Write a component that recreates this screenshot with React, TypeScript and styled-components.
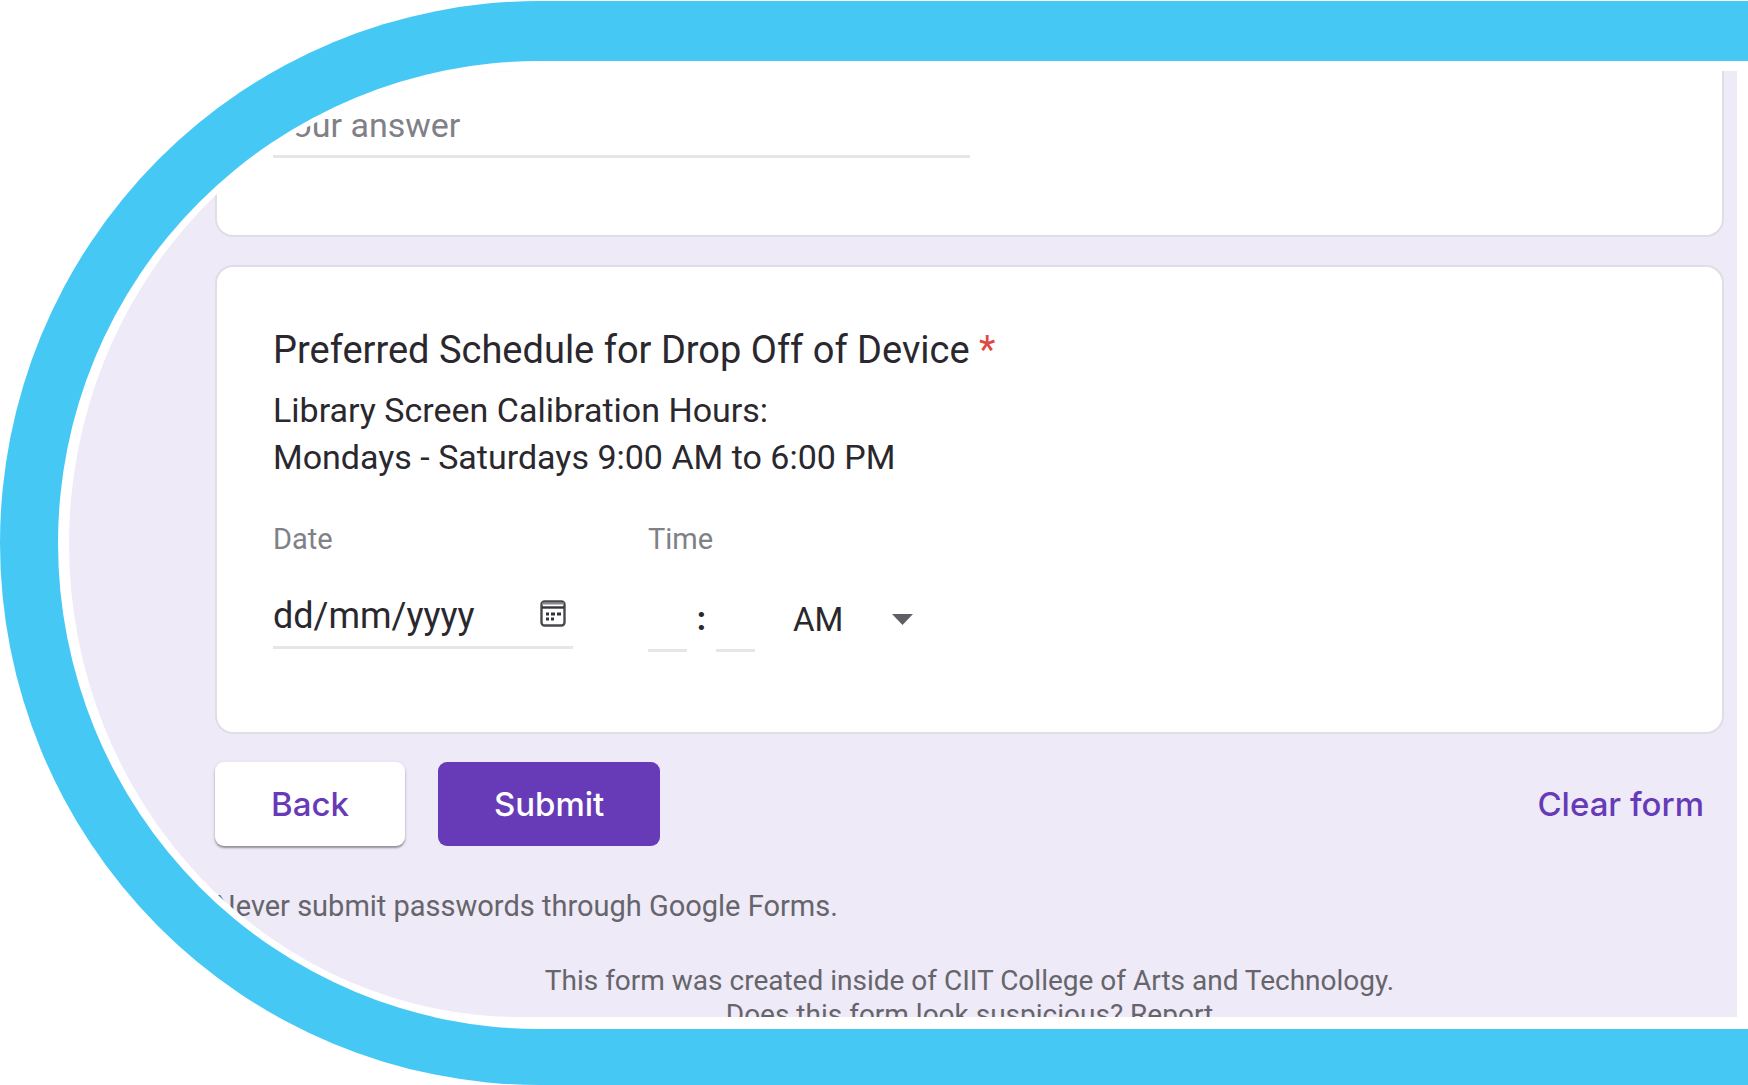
import React from "react";
import styled, { createGlobalStyle } from "styled-components";

const colors = {
  frame: "#46c8f5",
  sheet: "#eeeaf7",
  line: "#e6e6e8",
  cardBorder: "#dfdee5",
  ink: "#2a282e",
  muted: "#808087",
  footer: "#65656b",
  accent: "#673ab7",
  danger: "#e04a3f",
};

const GlobalStyle = createGlobalStyle`
  *, *::before, *::after { box-sizing: border-box; }
  body { margin: 0; background: #fff; font-family: Roboto, "Liberation Sans", sans-serif; color: ${colors.ink}; }
  input, select, button { font: inherit; color: inherit; margin: 0; padding: 0; border: 0; background: none; outline: none; border-radius: 0; }
  h2, p { margin: 0; }
`;

const Page = styled.div`
  height: 100vh;
  padding: 1px 0 0;
  overflow: hidden;
`;

const Frame = styled.div`
  display: flex;
  height: 100%;
  padding: 10px 11px 12px;
  border: solid ${colors.frame};
  border-width: 60px 0 56px 58px;
  border-radius: 540px 0 0 540px / 50% 0 0 50%;
`;

const Sheet = styled.main`
  flex: 1;
  min-width: 0;
  padding: 0 13px 0 146px;
  overflow: hidden;
  background: ${colors.sheet};
  border-radius: 452px 0 0 452px / 50% 0 0 50%;
`;

const Card = styled.section<{ $continued?: boolean }>`
  padding: ${(p) => (p.$continued ? "24px 56px 77px" : "55px 56px 80px")};
  border: 2px solid ${colors.cardBorder};
  border-top-width: ${(p) => (p.$continued ? "0" : "2px")};
  border-radius: ${(p) => (p.$continued ? "0 0 18px 18px" : "18px")};
  background: #fff;

  & + & {
    margin-top: 28px;
  }
`;

const Title = styled.h2`
  font-size: 38px;
  font-weight: 400;
  line-height: 56px;
`;

const Required = styled.span`
  color: ${colors.danger};
`;

const Description = styled.p`
  margin-top: 9px;
  font-size: 34px;
  line-height: 47px;
`;

const TextInput = styled.input`
  display: block;
  width: 50%;
  height: 63px;
  border-bottom: 3px solid ${colors.line};
  font-size: 34px;

  &::placeholder {
    color: ${colors.muted};
    opacity: 1;
  }
`;

const Fields = styled.div`
  display: flex;
  gap: 75px;
  margin-top: 40px;
`;

const Field = styled.div`
  display: flex;
  flex-direction: column;
  gap: 29px;
`;

const Label = styled.label`
  color: ${colors.muted};
  font-size: 29px;
  line-height: 36px;
`;

const DateBox = styled.div`
  display: flex;
  align-items: center;
  width: 300px;
  height: 63px;
  border-bottom: 3px solid ${colors.line};
`;

const DateInput = styled.input`
  flex: 1;
  min-width: 0;
  font-size: 36px;

  &::placeholder {
    color: ${colors.ink};
    opacity: 1;
  }
`;

const IconButton = styled.button`
  display: flex;
  padding: 0 7px 6px;
`;

const TimeRow = styled.div`
  display: flex;
  align-items: flex-end;
  height: 66px;
  font-size: 33px;
`;

const TimeInput = styled.input`
  width: 39px;
  height: 63px;
  border-bottom: 3px solid ${colors.line};
  text-align: center;
`;

const Colon = styled.span`
  width: 29px;
  line-height: 66px;
  text-align: center;
  font-weight: 700;
`;

const SelectBox = styled.div`
  display: grid;
  align-items: center;
  width: 120px;
  height: 66px;
  margin-left: 38px;

  & > * {
    grid-area: 1 / 1;
  }

  & > svg {
    justify-self: end;
    pointer-events: none;
  }
`;

const Select = styled.select`
  width: 100%;
  height: 60px;
  appearance: none;
`;

const Actions = styled.div`
  display: flex;
  align-items: center;
  gap: 33px;
  margin-top: 28px;
`;

const Button = styled.button<{ $kind: "plain" | "primary" | "text" }>`
  height: 84px;
  padding: 0 ${(p) => (p.$kind === "text" ? 20 : 56)}px;
  margin-left: ${(p) => (p.$kind === "text" ? "auto" : "0")};
  border-radius: 9px;
  background: ${(p) => ({ plain: "#fff", primary: colors.accent, text: "transparent" })[p.$kind]};
  box-shadow: ${(p) => (p.$kind === "plain" ? "0 2px 2px rgba(0, 0, 0, 0.35), 0 1px 5px rgba(0, 0, 0, 0.08)" : "none")};
  color: ${(p) => (p.$kind === "primary" ? "#fff" : colors.accent)};
  font-family: Inter, Roboto, sans-serif;
  font-size: 33px;
  font-weight: 500;
`;

const Note = styled.p<{ $centered?: boolean }>`
  margin-top: ${(p) => (p.$centered ? 41 : 43)}px;
  color: ${colors.footer};
  font-size: ${(p) => (p.$centered ? 28 : 29)}px;
  line-height: 34px;
  text-align: ${(p) => (p.$centered ? "center" : "left")};
`;

const NoteLink = styled.a`
  color: inherit;
  text-decoration: none;
`;

const CalendarIcon = () => (
  <svg width="26" height="27" viewBox="0 0 26 27" fill="none" aria-hidden="true">
    <rect x="1.5" y="1.5" width="23" height="24" rx="3" stroke="#4a484e" strokeWidth="2.4" />
    <path d="M2 3.5h22" stroke="#8a888e" strokeWidth="2" />
    <path d="M2 7.5h22" stroke="#35333a" strokeWidth="2.4" />
    <path d="M6 14h3M11 14h4M17 14h4M6 19h3M11 19h3" stroke="#35333a" strokeWidth="3" />
  </svg>
);

const ArrowIcon = () => (
  <svg width="21" height="11" viewBox="0 0 21 11" aria-hidden="true">
    <path d="M0 0h21L10.5 11z" fill="#5f6066" />
  </svg>
);

export default function App() {
  return (
    <>
      <GlobalStyle />
      <Page>
        <Frame>
          <Sheet>
            <Card $continued>
              <TextInput type="text" placeholder="Your answer" aria-label="Your answer" />
            </Card>

            <Card>
              <Title>
                Preferred Schedule for Drop Off of Device <Required>*</Required>
              </Title>
              <Description>
                Library Screen Calibration Hours:
                <br />
                Mondays - Saturdays 9:00 AM to 6:00 PM
              </Description>
              <Fields>
                <Field>
                  <Label htmlFor="date">Date</Label>
                  <DateBox>
                    <DateInput id="date" type="text" placeholder="dd/mm/yyyy" />
                    <IconButton type="button" aria-label="Open calendar">
                      <CalendarIcon />
                    </IconButton>
                  </DateBox>
                </Field>
                <Field>
                  <Label htmlFor="hour">Time</Label>
                  <TimeRow>
                    <TimeInput id="hour" type="text" aria-label="Hour" />
                    <Colon>:</Colon>
                    <TimeInput type="text" aria-label="Minute" />
                    <SelectBox>
                      <Select aria-label="AM or PM" defaultValue="AM">
                        <option>AM</option>
                        <option>PM</option>
                      </Select>
                      <ArrowIcon />
                    </SelectBox>
                  </TimeRow>
                </Field>
              </Fields>
            </Card>

            <Actions>
              <Button type="button" $kind="plain">Back</Button>
              <Button type="submit" $kind="primary">Submit</Button>
              <Button type="reset" $kind="text">Clear form</Button>
            </Actions>

            <Note>Never submit passwords through Google Forms.</Note>
            <Note $centered>
              This form was created inside of CIIT College of Arts and Technology.
              <br />
              Does this form look suspicious? <NoteLink href="#report">Report</NoteLink>
            </Note>
          </Sheet>
        </Frame>
      </Page>
    </>
  );
}
